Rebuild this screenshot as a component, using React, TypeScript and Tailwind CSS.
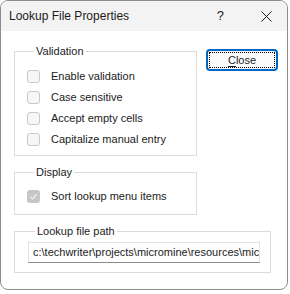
import React from "react";

const font = { fontFamily: '"Liberation Sans", Arial, sans-serif' };

function Box({ checked = false, disabled = false }: { checked?: boolean; disabled?: boolean }) {
  if (checked && disabled) {
    return (
      <span className="flex h-[13px] w-[13px] items-center justify-center rounded-[3px] bg-[#c6c6c6]">
        <svg width="9" height="9" viewBox="0 0 9 9">
          <path d="M1.5 4.8 L3.6 6.8 L7.6 2.2" fill="none" stroke="#f2f2f2" strokeWidth="1.2" />
        </svg>
      </span>
    );
  }
  return <span className="block h-[13px] w-[13px] rounded-[3px] border border-[#c9c9c9] bg-[#f7f7f7]" />;
}

function Row({ label, checked, disabled }: { label: string; checked?: boolean; disabled?: boolean }) {
  return (
    <div className="flex h-[21px] items-center">
      <Box checked={checked} disabled={disabled} />
      <span className="ml-[11px] text-[11px] text-[#1b1b1b]">{label}</span>
    </div>
  );
}

function Group({
  title,
  className,
  children,
}: {
  title: string;
  className: string;
  children: React.ReactNode;
}) {
  return (
    <fieldset className={"border border-[#dcdcdc] " + className}>
      <legend className="ml-[7px] px-[2px] text-[11px] leading-[14px] text-[#1b1b1b]">{title}</legend>
      {children}
    </fieldset>
  );
}

export default function App() {
  return (
    <div className="h-[294px] w-[290px] bg-white" style={font}>
      <div className="flex h-[290px] w-[288px] flex-col overflow-hidden rounded-[8px] border border-[#8c8c8c] bg-white">
        <div className="flex h-[30px] shrink-0 items-center bg-[#f3f3f3]">
          <span className="ml-[8px] text-[12px] text-[#1b1b1b]">Lookup File Properties</span>
          <span className="ml-auto mr-[37px] text-[13px] text-[#1b1b1b]">?</span>
          <svg width="11" height="11" viewBox="0 0 11 11" className="mr-[15px]">
            <path d="M0.5 0.5 L10.5 10.5 M10.5 0.5 L0.5 10.5" stroke="#1b1b1b" strokeWidth="1" />
          </svg>
        </div>
        <div className="flex flex-col pl-[13px] pr-[9px] pt-[13px]">
          <div className="flex">
            <div className="flex w-[184px] flex-col">
              <Group title="Validation" className="pb-[5px] pl-[12px] pt-[8px]">
                <Row label="Enable validation" />
                <Row label="Case sensitive" />
                <Row label="Accept empty cells" />
                <Row label="Capitalize manual entry" />
              </Group>
              <Group title="Display" className="mt-[9px] pb-[7px] pl-[12px] pt-[7px]">
                <Row label="Sort lookup menu items" checked disabled />
              </Group>
            </div>
            <div className="ml-[9px] pt-[5px]">
              <button
                className="relative flex h-[22px] w-[72px] items-center justify-center rounded-[4px] border-2 border-[#0067c0] bg-[#fbfbfb] text-[11px] text-[#1b1b1b]"
                style={font}
              >
                <span className="absolute inset-[1px] border border-dotted border-black" />
                <span>
                  <span className="underline underline-offset-[2px]">C</span>lose
                </span>
              </button>
            </div>
          </div>
          <Group title="Lookup file path" className="mt-[9px] w-[257px] pb-[9px] pl-[13px] pt-[4px]">
            <div className="flex h-[21px] w-[232px] items-center overflow-hidden whitespace-nowrap border border-[#e3e3e3] border-b-[#8a8a8a] bg-white pl-[4px] text-[11px] text-[#1b1b1b]">
              c:\techwriter\projects\micromine\resources\mic
            </div>
          </Group>
        </div>
      </div>
    </div>
  );
}
